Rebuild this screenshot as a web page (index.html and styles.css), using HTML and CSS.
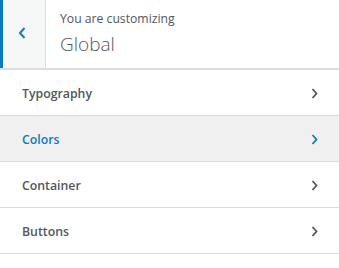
FILE: index.html
```html
<!DOCTYPE html>
<html>
<head>
<meta charset="utf-8">
<link rel="stylesheet" href="styles.css">
</head>
<body>
<div class="panel">
  <div class="header">
    <button class="back" aria-label="Back">
      <svg width="8" height="12" viewBox="0 0 8 12"><path d="M6.5 1 L2 6 L6.5 11" fill="none" stroke="currentColor" stroke-width="2"/></svg>
    </button>
    <div class="title">
      <span class="pre">You are customizing</span>
      <span class="name">Global</span>
    </div>
  </div>
  <ul class="sections">
    <li class="item"><span>Typography</span><svg class="chev" width="7" height="11" viewBox="0 0 7 11"><path d="M1.5 1 L5.5 5.5 L1.5 10" fill="none" stroke="currentColor" stroke-width="1.8"/></svg></li>
    <li class="item active"><span>Colors</span><svg class="chev" width="7" height="11" viewBox="0 0 7 11"><path d="M1.5 1 L5.5 5.5 L1.5 10" fill="none" stroke="currentColor" stroke-width="1.8"/></svg></li>
    <li class="item"><span>Container</span><svg class="chev" width="7" height="11" viewBox="0 0 7 11"><path d="M1.5 1 L5.5 5.5 L1.5 10" fill="none" stroke="currentColor" stroke-width="1.8"/></svg></li>
    <li class="item"><span>Buttons</span><svg class="chev" width="7" height="11" viewBox="0 0 7 11"><path d="M1.5 1 L5.5 5.5 L1.5 10" fill="none" stroke="currentColor" stroke-width="1.8"/></svg></li>
  </ul>
</div>
</body>
</html>
```

FILE: styles.css
```css
* { box-sizing: border-box; }
html, body { margin: 0; padding: 0; background: #fff; }
body { font-family: "Open Sans", "Noto Sans", sans-serif; color: #50575e; }
.panel { width: 339px; }
.header {
  display: flex;
  height: 70px;
  border-bottom: 2px solid #dcdcde;
  background: #fff;
}
.back {
  width: 46px;
  height: 100%;
  flex: none;
  border: 0;
  border-left: 3px solid #0a7bc2;
  border-right: 1px solid #dcdcde;
  background: #f6f7f7;
  color: #1e78c2;
  padding: 0 5px 2px 0;
  display: flex;
  align-items: center;
  justify-content: center;
}
.title {
  display: flex;
  flex-direction: column;
  padding: 9px 0 0 14px;
}
.pre { font-size: 12.2px; line-height: 20px; color: #50575e; }
.name { font-size: 19px; font-weight: 300; line-height: 30px; color: #50575e; }
.sections { list-style: none; margin: 0; padding: 0; }
.item {
  height: 46px;
  border-bottom: 1px solid #dcdcde;
  display: flex;
  align-items: center;
  justify-content: space-between;
  padding: 2px 21px 0 22px;
  font-size: 12.3px;
  font-weight: 600;
  color: #50575e;
}
.item .chev { color: #50575e; }
.item.active { background: #f0f0f1; color: #0a7bc2; }
.item.active .chev { color: #0a7bc2; }
```
